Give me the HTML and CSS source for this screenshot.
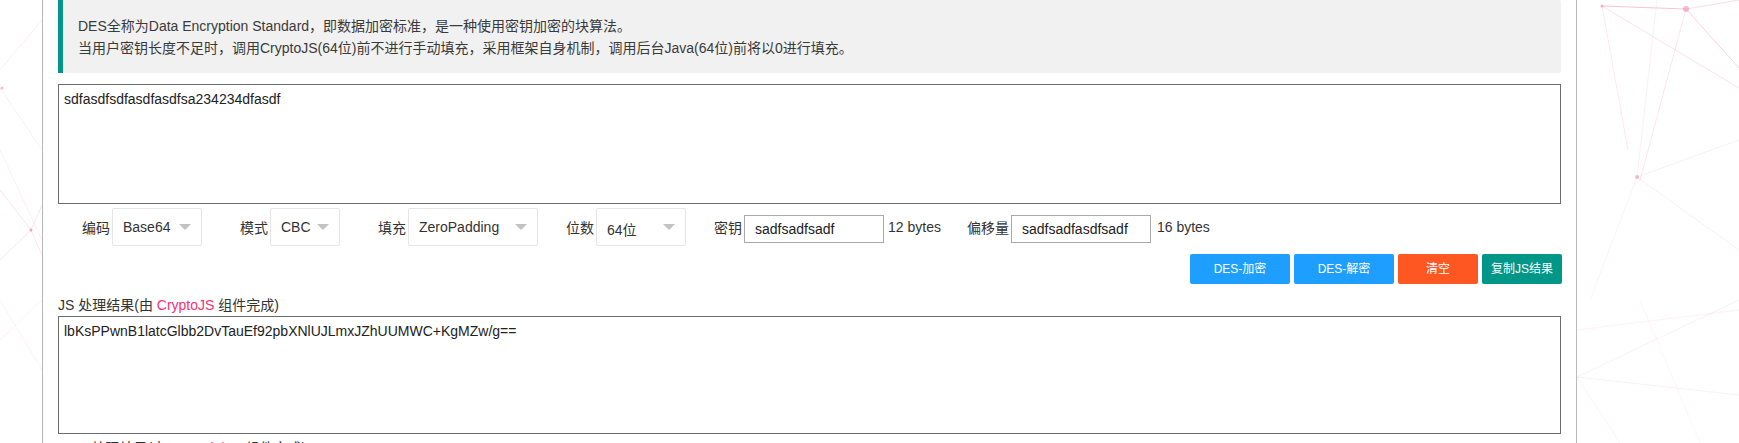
FILE: index.html
```html
<!DOCTYPE html>
<html lang="zh-CN">
<head>
<meta charset="utf-8">
<title>DES 加密解密</title>
<link rel="stylesheet" href="styles.css">
</head>
<body>
<div class="bg">
  <svg class="bg-net" width="1739" height="443" viewBox="0 0 1739 443" xmlns="http://www.w3.org/2000/svg">
    <g stroke="#f7a8c4" stroke-width="1" fill="none">
      <line x1="1602" y1="6" x2="1686" y2="9" stroke-opacity="0.7"/>
      <line x1="1602" y1="6" x2="1739" y2="88" stroke-opacity="0.35"/>
      <line x1="1686" y1="9" x2="1739" y2="68" stroke-opacity="0.5"/>
      <line x1="1602" y1="6" x2="1628" y2="150" stroke-opacity="0.25"/>
      <line x1="1686" y1="9" x2="1640" y2="180" stroke-opacity="0.3"/>
      <line x1="1657" y1="0" x2="1637" y2="177" stroke-opacity="0.2"/>
      <line x1="1686" y1="9" x2="1739" y2="0" stroke-opacity="0.4"/>
      <line x1="1637" y1="177" x2="1739" y2="140" stroke-opacity="0.2"/>
      <line x1="1637" y1="177" x2="1739" y2="250" stroke-opacity="0.2"/>
      <line x1="1637" y1="177" x2="1590" y2="300" stroke-opacity="0.15"/>
      <line x1="1577" y1="377" x2="1739" y2="300" stroke-opacity="0.2"/>
      <line x1="1577" y1="377" x2="1739" y2="395" stroke-opacity="0.2"/>
      <line x1="1577" y1="330" x2="1739" y2="310" stroke-opacity="0.15"/>
      <line x1="1577" y1="377" x2="1620" y2="443" stroke-opacity="0.15"/>
      <line x1="1640" y1="300" x2="1700" y2="443" stroke-opacity="0.12"/>
      <line x1="0" y1="70" x2="42" y2="20" stroke-opacity="0.2"/>
      <line x1="0" y1="88" x2="42" y2="150" stroke-opacity="0.2"/>
      <line x1="31" y1="230" x2="0" y2="190" stroke-opacity="0.35"/>
      <line x1="31" y1="230" x2="42" y2="255" stroke-opacity="0.3"/>
      <line x1="31" y1="230" x2="0" y2="260" stroke-opacity="0.3"/>
      <line x1="31" y1="230" x2="42" y2="205" stroke-opacity="0.3"/>
      <line x1="0" y1="150" x2="42" y2="240" stroke-opacity="0.2"/>
      <line x1="0" y1="340" x2="42" y2="300" stroke-opacity="0.15"/>
      <line x1="0" y1="300" x2="42" y2="370" stroke-opacity="0.15"/>
    </g>
    <g fill="#f48fb1">
      <circle cx="1686" cy="9" r="3" fill-opacity="0.6"/>
      <circle cx="1602" cy="6" r="1.5" fill-opacity="0.7"/>
      <circle cx="1637" cy="177" r="2" fill-opacity="0.6"/>
      <circle cx="31" cy="230" r="1.5" fill-opacity="0.8"/>
      <circle cx="2" cy="88" r="1.5" fill-opacity="0.6"/>
    </g>
  </svg>
</div>
<main class="panel">
  <blockquote class="quote">DES全称为Data Encryption Standard，即数据加密标准，是一种使用密钥加密的块算法。<br>当用户密钥长度不足时，调用CryptoJS(64位)前不进行手动填充，采用框架自身机制，调用后台Java(64位)前将以0进行填充。</blockquote>

  <textarea class="ta ta-input">sdfasdfsdfasdfasdfsa234234dfasdf</textarea>

  <div class="controls">
    <div class="group g-first">
      <span class="lbl">编码</span>
      <div class="select w-90"><span class="select-val">Base64</span><i class="edge"></i></div>
    </div>
    <div class="group g-wide">
      <span class="lbl">模式</span>
      <div class="select w-70"><span class="select-val">CBC</span><i class="edge"></i></div>
    </div>
    <div class="group g-wide">
      <span class="lbl">填充</span>
      <div class="select w-130"><span class="select-val">ZeroPadding</span><i class="edge"></i></div>
    </div>
    <div class="group g-narrow">
      <span class="lbl">位数</span>
      <div class="select w-90"><span class="select-val val-low">64位</span><i class="edge"></i></div>
    </div>
    <div class="group g-narrow">
      <span class="lbl">密钥</span>
      <input class="field" type="text" value="sadfsadfsadf">
      <span class="bytes">12 bytes</span>
    </div>
    <div class="group g-last">
      <span class="lbl">偏移量</span>
      <input class="field" type="text" value="sadfsadfasdfsadf">
      <span class="bytes bytes-wide">16 bytes</span>
    </div>
  </div>

  <div class="actions">
    <button class="btn btn-blue">DES-加密</button>
    <button class="btn btn-blue">DES-解密</button>
    <button class="btn btn-orange btn-small">清空</button>
    <button class="btn btn-teal btn-small">复制JS结果</button>
  </div>

  <div class="result-label">JS 处理结果(由 <span class="hl">CryptoJS</span> 组件完成)</div>
  <textarea class="ta ta-output">lbKsPPwnB1latcGlbb2DvTauEf92pbXNlUJLmxJZhUUMWC+KgMZw/g==</textarea>
  <div class="result-label label-next">Java 处理结果(由 <span class="hl">JDK Cipher</span> 组件完成)</div>
</main>
</body>
</html>
```

FILE: styles.css
```css
html, body {
  margin: 0;
  padding: 0;
  overflow: hidden;
  background: #ffffff;
}

body {
  font-family: "Liberation Sans", Arial, "Noto Sans CJK SC", sans-serif;
  font-size: 14px;
  color: #333333;
  position: relative;
  min-height: 443px;
}

.bg {
  position: absolute;
  left: 0;
  top: 0;
  width: 1739px;
  height: 443px;
  z-index: 0;
}

.bg-net {
  display: block;
}

.panel {
  position: relative;
  z-index: 1;
  box-sizing: border-box;
  width: 1535px;
  min-height: 460px;
  margin-left: 42px;
  padding: 0 15px;
  background: #ffffff;
  border-left: 1px solid #b8b8b8;
  border-right: 1px solid #b8b8b8;
}

.quote {
  margin: 0;
  padding: 15px 15px 14px;
  border-left: 5px solid #009688;
  border-radius: 0 2px 2px 0;
  background: #f1f1f1;
  line-height: 22px;
  color: #3a3a3a;
}

.ta {
  display: block;
  box-sizing: border-box;
  width: 100%;
  padding: 6px 5px;
  border: 1px solid #6b6b6b;
  border-radius: 0;
  font-family: "Liberation Sans", Arial, "Noto Sans CJK SC", sans-serif;
  font-size: 14px;
  color: #222222;
  resize: none;
  background: #ffffff;
  outline: none;
}

.ta-input {
  margin-top: 11px;
  height: 120px;
}

.ta-output {
  height: 118px;
}

.controls {
  display: flex;
  align-items: center;
  margin-top: 4px;
  height: 38px;
}

.group {
  display: flex;
  align-items: center;
  flex: none;
}

.g-first { margin-left: 24px; }
.g-wide { margin-left: 38px; }
.g-narrow { margin-left: 28px; }
.g-last { margin-left: 26px; }

.lbl {
  margin-right: 2px;
  color: #333333;
  white-space: nowrap;
}

.select {
  position: relative;
  box-sizing: border-box;
  height: 38px;
  border: 1px solid #e6e6e6;
  border-radius: 2px;
  background: #ffffff;
  display: flex;
  align-items: center;
  padding-left: 10px;
}

.w-90 { width: 90px; }
.w-70 { width: 70px; }
.w-130 { width: 130px; }

.select-val {
  color: #333333;
  white-space: nowrap;
}

.val-low {
  position: relative;
  top: 2px;
}

.edge {
  position: absolute;
  right: 10px;
  top: 50%;
  margin-top: -3px;
  width: 0;
  height: 0;
  border-style: solid;
  border-width: 6px 6px 0 6px;
  border-color: #c2c2c2 transparent transparent transparent;
}

.field {
  box-sizing: border-box;
  width: 140px;
  height: 28px;
  margin-top: 3px;
  padding: 0 10px;
  border: 1px solid #a9a9a9;
  border-radius: 0;
  font-family: "Liberation Sans", Arial, "Noto Sans CJK SC", sans-serif;
  font-size: 14px;
  color: #222222;
  background: #ffffff;
  outline: none;
}

.bytes {
  margin-left: 4px;
  white-space: nowrap;
  color: #333333;
}

.bytes-wide {
  margin-left: 6px;
}

.actions {
  display: flex;
  justify-content: flex-end;
  gap: 4px;
  margin-top: 8px;
  margin-right: -1px;
}

.btn {
  box-sizing: border-box;
  width: 100px;
  height: 30px;
  padding: 0;
  border: none;
  border-radius: 2px;
  color: #ffffff;
  font-family: "Liberation Sans", Arial, "Noto Sans CJK SC", sans-serif;
  font-size: 12px;
  line-height: 30px;
  text-align: center;
  cursor: pointer;
}

.btn-small { width: 80px; }
.btn-blue { background: #1e9fff; }
.btn-orange { background: #ff5722; }
.btn-teal { background: #009688; }

.result-label {
  margin-top: 10px;
  line-height: 22px;
  color: #333333;
}

.label-next {
  margin-top: 3px;
}

.hl {
  color: #f5317a;
}
```
